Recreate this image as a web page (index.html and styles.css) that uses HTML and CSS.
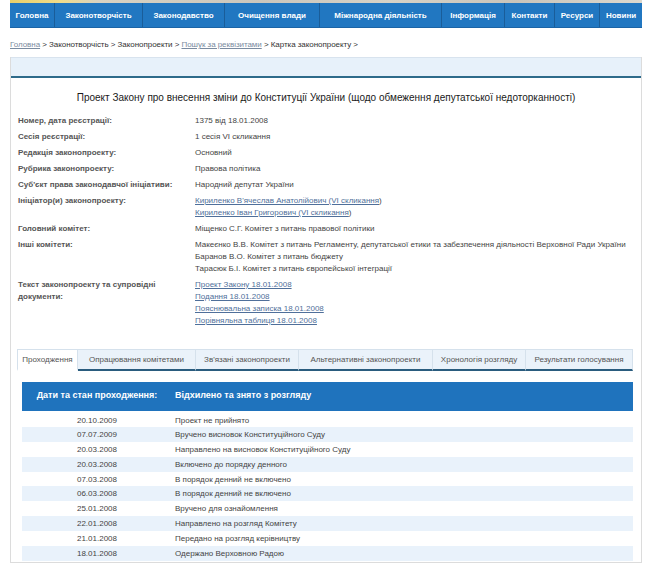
FILE: index.html
```html
<!DOCTYPE html>
<html lang="uk">
<head>
<meta charset="utf-8">
<title>Картка законопроекту</title>
<link rel="stylesheet" href="styles.css">
</head>
<body>
<div class="page">
  <div class="banner"></div>
  <nav class="nav">
    <a class="nav-item w1">Головна</a>
    <a class="nav-item w2">Законотворчість</a>
    <a class="nav-item w3">Законодавство</a>
    <a class="nav-item w4">Очищення влади</a>
    <a class="nav-item w5">Міжнародна діяльність</a>
    <a class="nav-item w6">Інформація</a>
    <a class="nav-item w7">Контакти</a>
    <a class="nav-item w8">Ресурси</a>
    <a class="nav-item w9">Новини</a>
  </nav>
  <div class="crumbs"><a class="crumb-link">Головна</a> &gt; Законотворчість &gt; Законопроекти &gt; <a class="crumb-link">Пошук за реквізитами</a> &gt; Картка законопроекту &gt;</div>

  <div class="panel">
    <div class="panel-head"></div>
    <h1 class="title">Проект Закону про внесення зміни до Конституції України (щодо обмеження депутатської недоторканності)</h1>

    <div class="info">
      <div class="label">Номер, дата реєстрації:</div>
      <div class="value">1375 від 18.01.2008</div>

      <div class="label">Сесія реєстрації:</div>
      <div class="value">1 сесія VI скликання</div>

      <div class="label">Редакція законопроекту:</div>
      <div class="value">Основний</div>

      <div class="label">Рубрика законопроекту:</div>
      <div class="value">Правова політика</div>

      <div class="label">Суб'єкт права законодавчої ініціативи:</div>
      <div class="value">Народний депутат України</div>

      <div class="label">Ініціатор(и) законопроекту:</div>
      <div class="value"><a class="link">Кириленко В'ячеслав Анатолійович (VI скликання</a>)<br><a class="link">Кириленко Іван Григорович (VI скликання</a>)</div>

      <div class="label">Головний комітет:</div>
      <div class="value">Міщенко С.Г. Комітет з питань правової політики</div>

      <div class="label">Інші комітети:</div>
      <div class="value">Макеєнко В.В. Комітет з питань Регламенту, депутатської етики та забезпечення діяльності Верховної Ради України<br>Баранов В.О. Комітет з питань бюджету<br>Тарасюк Б.І. Комітет з питань європейської інтеграції</div>

      <div class="label">Текст законопроекту та супровідні документи:</div>
      <div class="value"><a class="link">Проект Закону 18.01.2008</a><br><a class="link">Подання 18.01.2008</a><br><a class="link">Пояснювальна записка 18.01.2008</a><br><a class="link">Порівняльна таблиця 18.01.2008</a></div>
    </div>

    <div class="tabs">
      <div class="tab active t1">Проходження</div>
      <div class="tab t2">Опрацювання комітетами</div>
      <div class="tab t3">Зв'язані законопроекти</div>
      <div class="tab t4">Альтернативні законопроекти</div>
      <div class="tab t5">Хронологія розгляду</div>
      <div class="tab t6">Результати голосування</div>
    </div>

    <table class="stages">
      <thead>
        <tr><th class="c-date">Дати та стан проходження:</th><th class="c-state">Відхилено та знято з розгляду</th></tr>
      </thead>
      <tbody>
        <tr><td class="c-date">20.10.2009</td><td class="c-state">Проект не прийнято</td></tr>
        <tr><td class="c-date">07.07.2009</td><td class="c-state">Вручено висновок Конституційного Суду</td></tr>
        <tr><td class="c-date">20.03.2008</td><td class="c-state">Направлено на висновок Конституційного Суду</td></tr>
        <tr><td class="c-date">20.03.2008</td><td class="c-state">Включено до порядку денного</td></tr>
        <tr><td class="c-date">07.03.2008</td><td class="c-state">В порядок денний не включено</td></tr>
        <tr><td class="c-date">06.03.2008</td><td class="c-state">В порядок денний не включено</td></tr>
        <tr><td class="c-date">25.01.2008</td><td class="c-state">Вручено для ознайомлення</td></tr>
        <tr><td class="c-date">22.01.2008</td><td class="c-state">Направлено на розгляд Комітету</td></tr>
        <tr><td class="c-date">21.01.2008</td><td class="c-state">Передано на розгляд керівництву</td></tr>
        <tr><td class="c-date">18.01.2008</td><td class="c-state">Одержано Верховною Радою</td></tr>
      </tbody>
    </table>
  </div>
</div>
</body>
</html>
```

FILE: styles.css
```css
* { box-sizing: border-box; }
html, body { margin: 0; padding: 0; background: #fff; }
body {
  font-family: "Liberation Sans", Arial, sans-serif;
  font-size: 8px;
  color: #333;
}
.page { width: 650px; padding-left: 10px; }

.banner {
  width: 632px;
  height: 3px;
  background: linear-gradient(90deg, #e8cf6a 0, #f0dc8a 8%, #d8d2c2 14%, #cbc6bc 40%, #d7d2c6 60%, #c9c4ba 80%, #dcd8ce 100%);
}
.nav {
  display: flex;
  width: 632px;
  height: 25px;
  background: #2177c1;
  border-bottom: 1px solid #1b64a6;
}
.nav-item {
  display: flex;
  align-items: center;
  justify-content: center;
  height: 100%;
  color: #fff;
  font-weight: bold;
  font-size: 8px;
  border-right: 1px solid #1a5d99;
}
.nav-item:last-child { border-right: none; }
.w1 { width: 45px; }
.w2 { width: 88px; }
.w3 { width: 82px; }
.w4 { width: 95px; }
.w5 { width: 122px; }
.w6 { width: 63px; }
.w7 { width: 50px; }
.w8 { width: 45px; }
.w9 { width: 42px; }

.crumbs {
  height: 29px;
  line-height: 12px;
  padding-top: 11px;
  color: #333;
  font-size: 8px;
  letter-spacing: -0.05px;
}
.crumb-link { color: #7a8ba0; text-decoration: underline; }

.panel {
  width: 632px;
  border: 1px solid #dcdcdc;
  border-top: none;
  padding-bottom: 1px;
}
.panel-head {
  height: 21px;
  background: #e7f1fa;
  border-top: 1px solid #d8e3ee;
  border-bottom: 2px solid #2e6b8a;
}
.title {
  margin: 0;
  padding: 14px 0 0;
  line-height: 12px;
  text-align: center;
  font-size: 10px;
  font-weight: normal;
  color: #1a1a1a;
}
.info {
  display: grid;
  grid-template-columns: 177px 1fr;
  row-gap: 4px;
  padding: 11px 0 0 7px;
  line-height: 12px;
}
.label { font-weight: bold; color: #555; font-size: 8px; padding-right: 20px; }
.value { color: #444; font-size: 8px; }
.link { color: #4f6f9a; text-decoration: underline; }

.tabs {
  display: flex;
  margin: 22px 0 0 6px;
  width: 616px;
  height: 22px;
}
.tab {
  height: 22px;
  line-height: 19px;
  text-align: center;
  background: #eaf2fa;
  color: #555;
  font-size: 8px;
  border-top: 1px solid #d5e1ec;
  border-right: 1px solid #d5e1ec;
  border-bottom: 2px solid #2a5c7e;
}
.tab.active {
  background: #fff;
  border-left: 1px solid #d5e1ec;
  border-bottom: 2px solid transparent;
}
.t1 { width: 61px; }
.t2 { width: 118px; }
.t3 { width: 103px; }
.t4 { width: 134px; }
.t5 { width: 93px; }
.t6 { width: 107px; }

.stages {
  margin: 11px 0 0 11px;
  width: 611px;
  border-collapse: collapse;
}
.stages th {
  background: #1f73bd;
  background-clip: padding-box;
  color: #fff;
  font-weight: bold;
  font-size: 9px;
  height: 30px;
  padding: 0 0 3px;
  border-bottom: 3px solid #fff;
}
.stages td {
  height: 14.9px;
  padding: 0;
  font-size: 8px;
  color: #444;
}
.stages tbody tr:nth-child(even) td { background: #e9f2fb; }
.c-date { width: 150px; text-align: center; }
.c-state { text-align: left; padding-left: 3px !important; }
```
